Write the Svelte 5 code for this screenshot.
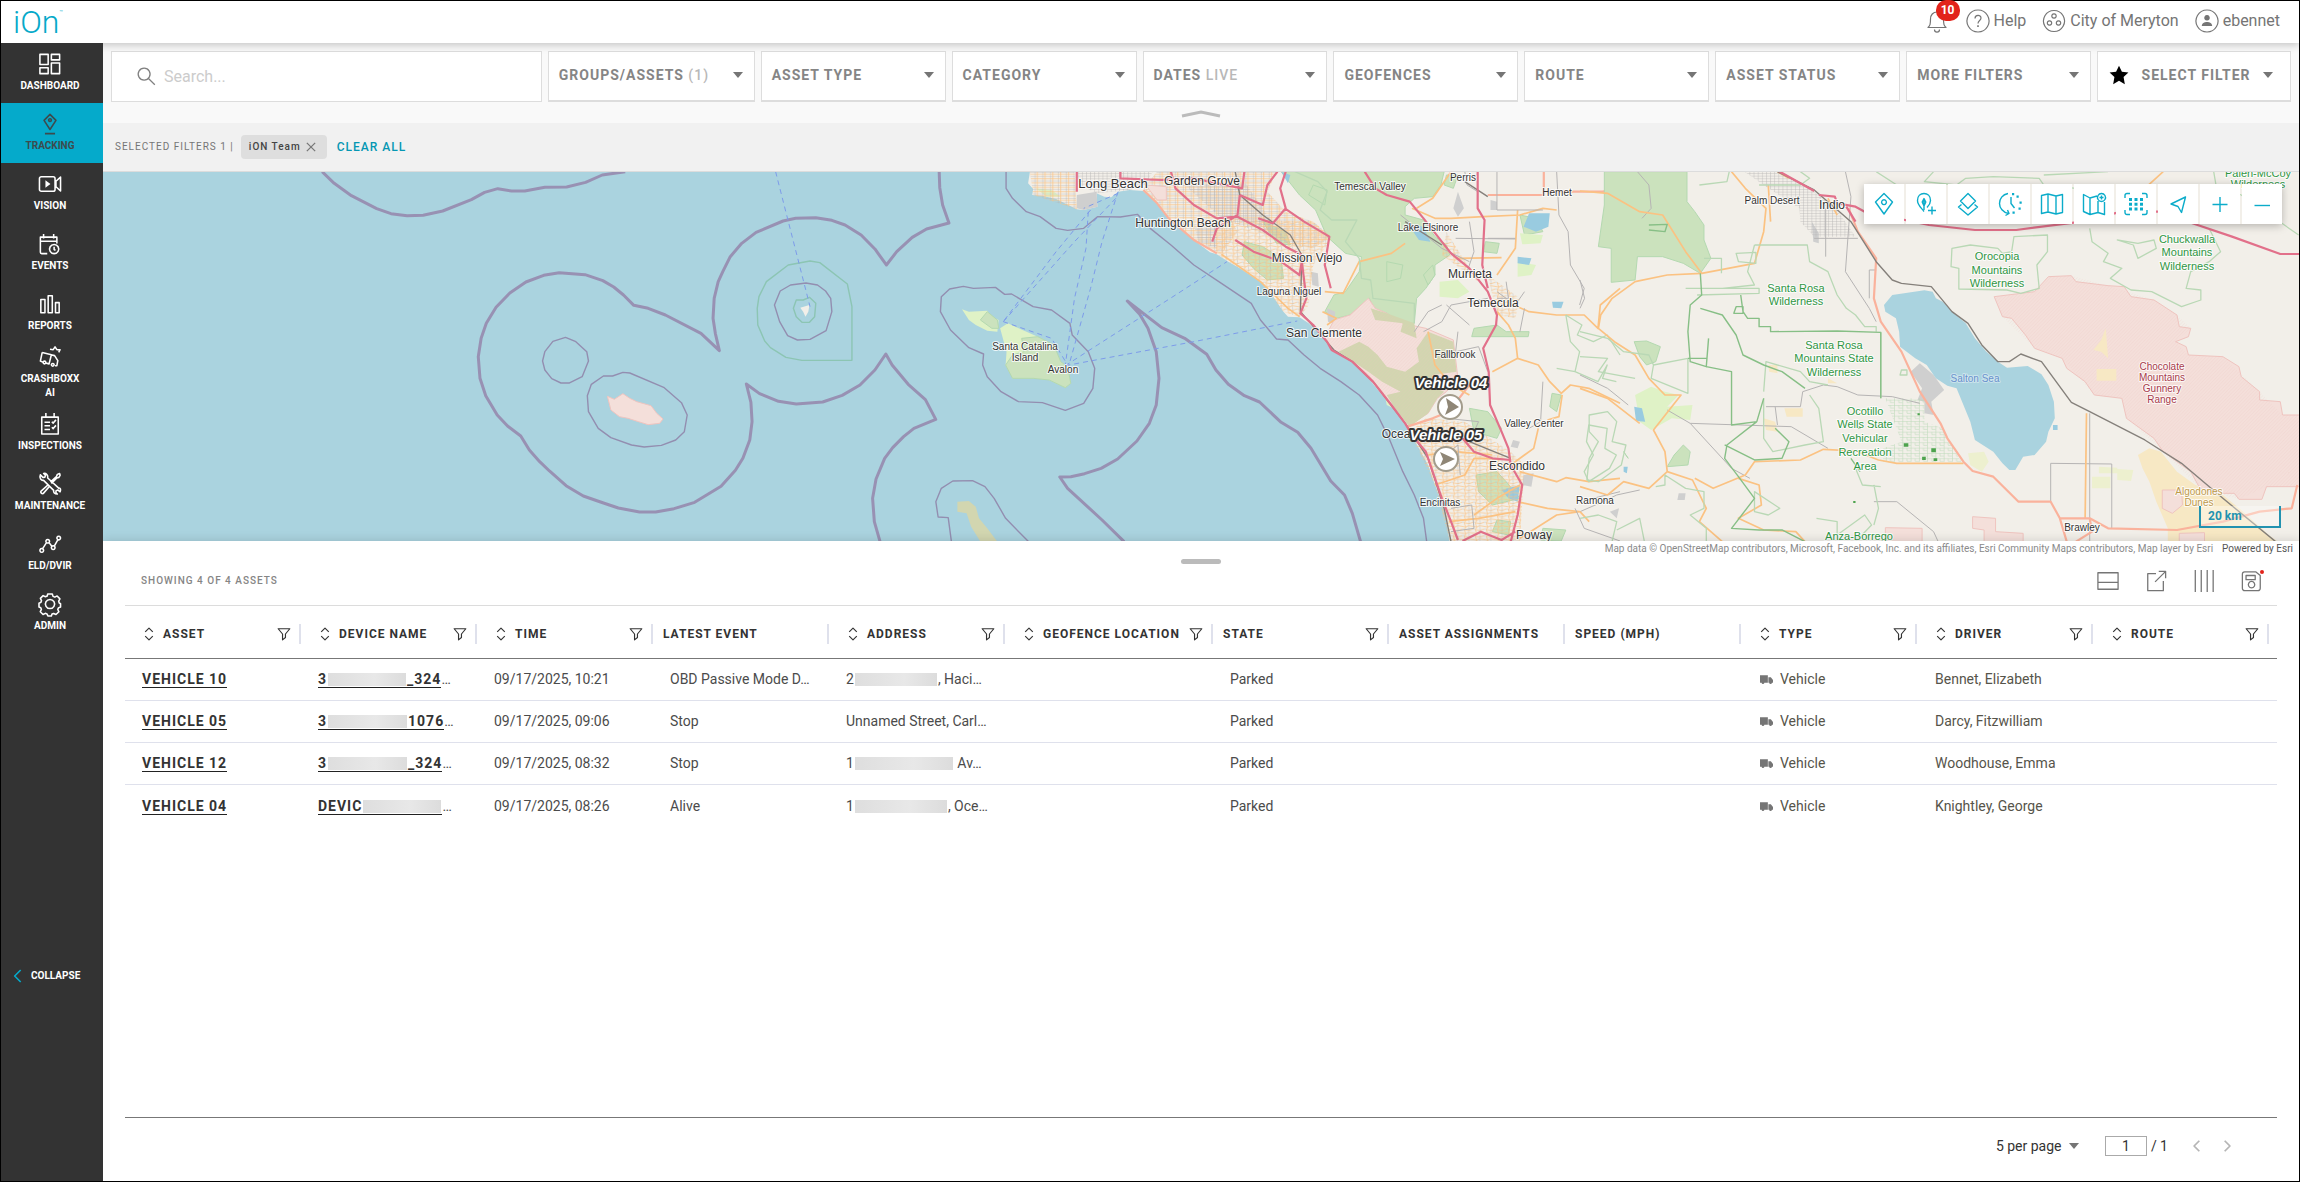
<script>
  const nav = [
    { id: 'dashboard', label: 'Dashboard' },
    { id: 'tracking', label: 'Tracking', active: true },
    { id: 'vision', label: 'Vision' },
    { id: 'events', label: 'Events' },
    { id: 'reports', label: 'Reports' },
    { id: 'crash', label: 'Crashboxx AI' },
    { id: 'inspections', label: 'Inspections' },
    { id: 'maintenance', label: 'Maintenance' },
    { id: 'eld', label: 'ELD/DVIR' },
    { id: 'admin', label: 'Admin' }
  ];

  const filters = [
    { label: 'Groups/Assets', note: '(1)' },
    { label: 'Asset Type' },
    { label: 'Category' },
    { label: 'Dates', note: 'Live' },
    { label: 'Geofences' },
    { label: 'Route' },
    { label: 'Asset Status' },
    { label: 'More Filters' },
    { label: 'Select Filter', star: true }
  ];

  // s: drawn with a stroke, f: filled
  const icons = {
    dashboard: { s: 'M1 1.5h9v11h-9zM13.500 1.500h9v6h-9zM1 16h9v6.500h-9zM13.500 11h9v11.500h-9z' },
    tracking: { s: 'M12 1.500L18.500 8 12 18 5.500 8zM6.500 22.500h11M12 6.200a1.500 1.500 0 1 0 .01 0z' },
    vision: { s: 'M2.500 4h13a2 2 0 0 1 2 2v12a2 2 0 0 1-2 2h-13a2 2 0 0 1-2-2v-12a2 2 0 0 1 2-2zM23.500 4.500v15l-5-4.500v-6z', f: 'M7 8l5.500 4-5.500 4z' },
    events: { s: 'M9 22.500H3a1.500 1.500 0 0 1-1.500-1.500V4.500h18v7M1.500 9h18M5 1v5M16 1v5M16.500 12.500a5 5 0 1 0 .01 0zM16.500 15v3l1.500 1' },
    reports: { s: 'M2 7h4.500v14.500h-4.500zM10 3h4.500v18.500h-4.500zM18 10.500h4v11h-4z' },
    crash: { s: 'M3.500 7l10 2.500-2.500 10-4-1M3.500 7l-2 9.500 2.500 1M13 9.500l4 1 3.500 5.500-1 5.500h-2M6 16.500a1.500 1.500 0 1 0 .01 0zM15 19a1.500 1.500 0 1 0 .01 0zM12 3.500l3.500.5 2-3 2 3h3.500l-1.500 3' },
    inspections: { s: 'M3 4.500h18v18.500h-18zM7.500 0v5M16.500 0v5M6 10h6M6 14h6M6 18h6M14 9.500l1.500 1.500 3-3.500M14 15.500l1.500 1.500 3-3.500' },
    maintenance: { s: 'M1.500 2l3 3 2-.5.5-2-2-2c3-.5 5 2 4.500 5l12 11c2-.5 2.500 2 1.500 4l-2.500-2-2 1v2l1.500 1.500c-3 0-4.500-2-4-4L5 8C2.500 8.500 0 5.500 1.500 2zM12.500 10l6.500-6 1-2.500 2.500-1 .5 2-1.500 2.500-2 .5-6 6M10.500 12.500L2 20a2 2 0 0 0 2.500 2.500l7.500-8.500' },
    eld: { s: 'M4 17l4.500-7M11 10.500l3 4M16.500 14.500l4-7M3 17a2 2 0 1 0 .01 0zM9.500 7a2 2 0 1 0 .01 0zM15.500 14a2 2 0 1 0 .01 0zM21.500 3.500a2 2 0 1 0 .01 0z' },
    admin: { s: 'M9.500 1h5l.8 2.700 2 .8 2.500-1.300 3 3.200-1.300 2.500.6 2 1.400.800v3.500l-2.300 1-.7 1.800 1.200 2.500-3.200 3-2.500-1.200-1.800.700-.700 2h-3.800l-1-2.200-1.800-.600-2.500 1.200-3-3 1.200-2.600-.700-1.800-1.900-.800v-4l2-1 .7-1.800-1.200-2.500 3-3 2.500 1.200 2-.8zM12 7a5 5 0 1 0 .01 0z' },
    pin: { s: 'M12 1.500L20.500 10 12 22 3.500 10zM12 7.800a2.400 2.400 0 1 0 .01 0z' },
    pen: { s: 'M10 19.500C7 15.500 3.500 13 3.500 8.500 3.500 4 6.500 1.500 10 1.500s6.500 2.500 6.500 7C16.500 11.500 15 13.500 13 15.500M10 8v10M18 14.500v8M14 18.500h8M10 6.500l1.800 3.500-1.800 4-1.800-4z' },
    layers: { s: 'M12 1.500l7.500 7.500-7.500 7.500-7.500-7.500zM5.500 12.500l-3 2.500 9.500 8 9.500-8-3-2.500' },
    history: { s: 'M10 1.500C4.500 2.500 1.500 7 1.500 11.500S5 20.500 10.500 21.500M7.500 23.500l3.500-2-1.500-3.500M13 5v6.500l3.500 4.500', f: 'M14 1h2.200v2.200H14zM18.500 3.500h2.200v2.200h-2.200zM21.500 9.500h2.200v2.200h-2.200zM20.500 15.500h2.200v2.200h-2.200zM14.500 19.500h2.200v2.200h-2.200z' },
    map: { s: 'M1.500 3.500l6.500-1.500 8 2 6.500-1.500v18l-6.500 1.500-8-2-6.500 1.500zM8 2v18M16 4v18' },
    mapadd: { s: 'M15 4l-7 2-6.500-3.500v17L8 22.500l8-2 6.500 2V10M8 6v16M16 9v11M19.500 1.500a4 4 0 1 0 .01 0zM19.500 3.500v4M17.500 5.500h4' },
    cluster: { s: 'M6 1.500H3A2 2 0 0 0 1 3.500V6M18 1.500h3a2 2 0 0 1 2 2V6M6 22.500H3a2 2 0 0 1-2-2V18M18 22.500h3a2 2 0 0 0 2-2V18', f: 'M5 6h3v3h-3zM10.500 6h3v3h-3zM16 6h3v3h-3zM5 10.800h3v3h-3zM10.500 10.800h3v3h-3zM16 10.800h3v3h-3zM5 15.500h3v3h-3zM10.500 15.500h3v3h-3zM16 15.500h3v3h-3z' },
    locate: { s: 'M19.500 5L5 12l7 2.500 3.500 6z' },
    plus: { s: 'M12 5v15M4.500 12.500h15' },
    minus: { s: 'M4.500 13.500h15.500' },
    card: { s: 'M1 3h22v18h-22zM1 13.500h22' },
    export: { s: 'M12 4H3v18.500h17V12M11 13l11-11M15 1.500h7.500V9' },
    columns: { s: 'M2.500 0v24M9 0v24M15.500 0v24M22 0v24' },
    save: { s: 'M4 2h12l5 4v14a2.500 2.500 0 0 1-2.500 2.500H4A2.500 2.500 0 0 1 1.500 20V4.500A2.500 2.500 0 0 1 4 2zM5.500 6h10v4.500h-10zM11.500 12.500a3.500 3.500 0 1 0 .01 0z' },
    bell: { s: 'M3 18.500c2-2 2.500-3 2.500-8.500 0-4 2.500-7 6.500-7s6.500 3 6.500 7c0 5.500.5 6.500 2.500 8.500zM9.500 20.500c0 3.500 5 3.500 5 0M12 1v2' },
    help: { s: 'M12 1a11 11 0 1 0 .01 0zM9 9.500c0-4 6-4 6-.5 0 2.500-3 2.500-3 5.500', f: 'M11.200 16.200h1.600v1.800h-1.600z' },
    org: { s: 'M12 1.500a10.500 10.500 0 1 0 .01 0zM12 4.800a2.200 2.200 0 1 0 .01 0zM7.500 11.800a2.200 2.200 0 1 0 .01 0zM16.500 11.800a2.200 2.200 0 1 0 .01 0z' },
    user: { s: 'M12 1a11 11 0 1 0 .01 0z', f: 'M12 6a2.800 2.800 0 1 0 .01 0zM6.800 17c0-5.500 10.400-5.500 10.400 0z' },
    search: { s: 'M9 1.500a7.500 7.500 0 1 0 .01 0zM14.500 14.500l8 8' },
    star: { f: 'M12 1l3.500 7 7.800 1-5.800 5.500 1.500 8.500L12 19l-7 4 1.500-8.500L.7 9l7.800-1z' },
    sort: { s: 'M5.500 8.500L12 2l6.500 6.500M5.500 15.500L12 22l6.500-6.500' },
    funnel: { s: 'M2 3h20l-7.500 9v6l-5 4V12z' },
    truck: { f: 'M0 4h14.500v14H8a2.500 2.500 0 0 1-5 0H0zM15.500 8h4.500l4 5v5h-2a2.500 2.500 0 0 1-5 0h-1.500z' },
    close: { s: 'M2 2l20 20M22 2L2 22' },
    left: { s: 'M16 3l-9 9 9 9' },
    right: { s: 'M8 3l9 9-9 9' }
  };

  const tools = [
    ['pin', 'Assets'], ['pen', 'Add landmark'], ['layers', 'Layers'], ['history', 'History'], ['map', 'Base map'],
    ['mapadd', 'Add map'], ['cluster', 'Clusters'], ['locate', 'Locate'], ['plus', 'Zoom in'], ['minus', 'Zoom out']
  ];
  const panelTools = [['card', 'Split view'], ['export', 'Export'], ['columns', 'Columns'], ['save', 'Save view']];

  const columns = [
    { label: 'Asset', sort: true, filter: true },
    { label: 'Device Name', sort: true, filter: true },
    { label: 'Time', sort: true, filter: true },
    { label: 'Latest Event' },
    { label: 'Address', sort: true, filter: true },
    { label: 'Geofence Location', sort: true, filter: true, wide: true },
    { label: 'State', filter: true },
    { label: 'Asset Assignments' },
    { label: 'Speed (MPH)' },
    { label: 'Type', sort: true, filter: true },
    { label: 'Driver', sort: true, filter: true },
    { label: 'Route', sort: true, filter: true }
  ];

  // dev and addr: visible start, width of the masked part, visible end
  const rows = [
    { asset: 'Vehicle 10', dev: ['3', 78, '_324'], time: '09/17/2025, 10:21', event: 'OBD Passive Mode D…', addr: ['2', 82, ', Haci…'], driver: 'Bennet, Elizabeth' },
    { asset: 'Vehicle 05', dev: ['3', 79, '1076'], time: '09/17/2025, 09:06', event: 'Stop', addr: ['Unnamed Street, Carl…', 0, ''], driver: 'Darcy, Fitzwilliam' },
    { asset: 'Vehicle 12', dev: ['3', 79, '_324'], time: '09/17/2025, 08:32', event: 'Stop', addr: ['1', 98, ' Av…'], driver: 'Woodhouse, Emma' },
    { asset: 'Vehicle 04', dev: ['DEVIC', 78, ''], time: '09/17/2025, 08:26', event: 'Alive', addr: ['1', 92, ', Oce…'], driver: 'Knightley, George' }
  ];

  const towns = [
    [1113, 188, 13, 'Long Beach'], [1202, 185, 12, 'Garden Grove'], [1370, 190, 10, 'Temescal Valley'], [1183, 227, 12, 'Huntington Beach'],
    [1307, 262, 12, 'Mission Viejo'], [1289, 295, 10, 'Laguna Niguel'], [1324, 337, 12, 'San Clemente'], [1463, 181, 10, 'Perris'],
    [1557, 196, 10, 'Hemet'], [1428, 231, 10, 'Lake Elsinore'], [1470, 278, 12, 'Murrieta'], [1493, 307, 12, 'Temecula'],
    [1455, 358, 10, 'Fallbrook'], [1025, 350, 10, 'Santa Catalina'], [1025, 361, 10, 'Island'], [1063, 373, 10, 'Avalon'],
    [1396, 438, 12, 'Ocea'], [1534, 427, 10, 'Valley Center'], [1517, 470, 12, 'Escondido'], [1440, 506, 10, 'Encinitas'],
    [1595, 504, 10, 'Ramona'], [1534, 539, 12, 'Poway'], [1772, 204, 10, 'Palm Desert'], [1832, 209, 12, 'Indio'], [2082, 531, 10, 'Brawley']
  ];
  const parks = [
    [2258, 177, 11, 'Palen-McCoy'], [2258, 188, 11, 'Wilderness'], [2187, 243, 11, 'Chuckwalla'], [2187, 256, 11, 'Mountains'], [2187, 270, 11, 'Wilderness'],
    [1997, 260, 11, 'Orocopia'], [1997, 274, 11, 'Mountains'], [1997, 287, 11, 'Wilderness'], [1796, 292, 11, 'Santa Rosa'], [1796, 305, 11, 'Wilderness'],
    [1834, 349, 11, 'Santa Rosa'], [1834, 362, 11, 'Mountains State'], [1834, 376, 11, 'Wilderness'], [1865, 415, 11, 'Ocotillo'], [1865, 428, 11, 'Wells State'],
    [1865, 442, 11, 'Vehicular'], [1865, 456, 11, 'Recreation'], [1865, 470, 11, 'Area'], [1859, 540, 11, 'Anza-Borrego']
  ];
  const range = [[2162, 370, 10, 'Chocolate'], [2162, 381, 10, 'Mountains'], [2162, 392, 10, 'Gunnery'], [2162, 403, 10, 'Range']];
  const dunes = [[2199, 495, 10, 'Algodones'], [2199, 506, 10, 'Dunes']];
  const sea = [[1975, 382, 10, 'Salton Sea']];
  const vehicles = [
    { x: 1451, y: 388, cx: 1450, cy: 407, label: 'Vehicle 04', turn: 'M-4 -9L9 0 -5 8 -2 0z' },
    { x: 1446, y: 440, cx: 1446, cy: 459, label: 'Vehicle 05', turn: 'M-6 -7L9 0 -6 7 -3 0z' }
  ];
</script>

{#snippet icon(name)}
  <svg class="icon" viewBox="0 0 24 24" aria-hidden="true">
    {#if icons[name].s}<path class="line" d={icons[name].s} />{/if}
    {#if icons[name].f}<path class="solid" d={icons[name].f} />{/if}
  </svg>
{/snippet}

{#snippet labels(list, kind)}
  {#each list as [x, y, size, text]}
    <text class={kind} {x} {y} font-size={size}>{text}</text>
  {/each}
{/snippet}

<div class="shell">
  <header>
    <a class="logo" href="#home">iOn<sup>™</sup></a>
    <div class="account">
      <button class="alerts" aria-label="Notifications">{@render icon('bell')}<span class="badge">10</span></button>
      <a href="#help">{@render icon('help')}Help</a>
      <a href="#org">{@render icon('org')}City of Meryton</a>
      <a href="#user">{@render icon('user')}ebennet</a>
    </div>
  </header>

  <div class="body">
    <nav>
      {#each nav as item}
        <a href="#{item.id}" class:active={item.active}>{@render icon(item.id)}<span>{item.label}</span></a>
      {/each}
      <button class="collapse">{@render icon('left')}Collapse</button>
    </nav>

    <main>
      <section class="filterbar">
        <div class="filters">
          <label class="search">{@render icon('search')}<input type="search" placeholder="Search..." aria-label="Search" /></label>
          {#each filters as f}
            <button class:favorite={f.star}>
              {#if f.star}{@render icon('star')}{/if}
              <span>{f.label} {#if f.note}<em>{f.note}</em>{/if}</span>
              <i class="caret"></i>
            </button>
          {/each}
        </div>
        <button class="fold" aria-label="Hide filters"><svg viewBox="0 0 40 8"><path d="M1 6L20 2 39 6" /></svg></button>
      </section>

      <section class="selected">
        <span>Selected Filters 1 |</span>
        <button class="chip">iON Team {@render icon('close')}</button>
        <button class="clear">Clear All</button>
      </section>

      <section class="map">
        <svg class="tiles" viewBox="103 172 2196 369" preserveAspectRatio="xMidYMin slice" role="img" aria-label="Map of Southern California">
          <defs>
            <pattern id="hatch" width="6" height="6" patternUnits="userSpaceOnUse" patternTransform="rotate(35)"><path class="hatch" d="M1 0V6" /></pattern>
            <pattern id="streets" width="17" height="13" patternUnits="userSpaceOnUse">
              <path class="minor" d="M5 0V13M0 9H17" /><path class="road" d="M0 2H17M10 0V13" />
            </pattern>
            <pattern id="blocks" width="9" height="8" patternUnits="userSpaceOnUse"><path class="minor" d="M0 1H9M1 0V8" /></pattern>
            <pattern id="plots" width="18" height="16" patternUnits="userSpaceOnUse"><path class="park-line" d="M0 1H18M1 0V16M10 1V9H18" /></pattern>
            <pattern id="suburb" width="24" height="20" patternUnits="userSpaceOnUse">
              <path class="road" d="M0 4L8 6 14 2 24 4M6 0L8 6 5 14 6 20M5 14L16 16 24 12" /><path class="minor" d="M14 2L16 16 13 20M0 12H5" />
            </pattern>
          </defs>
          <rect class="water" x="103" y="172" width="2196" height="369" />

          <!-- open sea: territorial limits and the outer islands -->
          <g transform="translate(100 165) scale(.574 .33333)">
            <path class="limit" d="M387 20L408 55 438 92 482 131 507 146 535 152 563 151 597 138 647 104 670 82 693 71 717 78 740 78 775 67 813 66 846 52 875 30 915 20" />
            <path class="limit" d="M1462 20L1463 68 1468 120 1479 174 1440 192 1415 217 1388 260 1370 300 1350 252 1326 210 1298 180 1275 166 1247 158 1212 160 1190 168 1143 202 1118 235 1098 275 1085 320 1077 350 1070 400 1068 460 1072 505 1079 557 1047 505 985 450 955 430 930 421 912 390 895 366 876 347 845 329 800 323 773 331 742 351 714 384 690 427 673 475 664 520 659 575 662 640 672 692 692 750 710 783 733 813 748 855 766 890 783 918 812 962 842 993 872 1011 903 1029 940 1041 968 1041 1000 1031 1036 1012 1082 964 1107 916 1120 880 1132 825 1136 770 1134 712 1126 657 1149 686 1182 709 1213 717 1259 711 1293 691 1324 660 1350 615 1369 567 1380 600 1408 658 1438 704 1456 763 1418 790 1400 815 1381 848 1367 880 1352 942 1346 1000 1349 1070 1359 1130" />
            <path class="baseline" d="M811 517L829 530 848 560 851 588 840 635 818 654 803 654 787 641 775 615 771 588 775 560 789 529ZM877 633L893 633 911 622 923 624 982 667 1013 713 1023 750 1018 800 1003 825 978 841 948 846 926 840 890 818 868 790 851 740 849 692 856 658ZM1230 354L1250 360 1264 378 1273 400 1275 440 1265 497 1237 523 1215 525 1198 512 1184 470 1175 420 1185 378 1203 360Z" />
            <path class="reserve" d="M1199 300L1237 288 1254 293 1302 357 1310 425 1310 586 1223 586 1195 577 1168 548 1158 528 1146 480 1145 430 1148 395 1161 350ZM1213 405L1225 405 1236 397 1247 415 1245 455 1236 472 1223 472 1213 455 1208 430Z" />
            <path class="land" d="M1220 428L1236 420 1234 440 1229 455 1225 440Z" />
            <path class="military" d="M884 694L896 703 911 686 923 700 935 710 960 722 970 745 981 762 975 775 955 779 938 770 920 760 905 755 890 735Z" />
            <path class="ferry" d="M1177 20L1237 425" />
          </g>

          <!-- coast from Long Beach to Poway -->
          <g transform="translate(900 165) scale(.4592 .33333)">
            <path class="land" d="M283 20L279 55 290 72 288 90 310 92 340 102 385 133 400 135 430 125 428 85 445 95 460 97 475 80 500 75 530 78 560 115 585 160 610 190 640 225 675 262 690 268 715 290 740 310 785 350 800 370 815 400 835 440 845 455 870 457 890 475 915 510 930 535 945 560 990 595 1020 640 1050 690 1085 750 1110 800 1130 850 1150 900 1165 960 1185 1030 1197 1130 3070 1130 3070 15Z" />
            <path class="forest" d="M830 20L1185 20 1178 60 1160 95 1120 100 1100 125 1100 150 1140 165 1165 215 1190 240 1197 270 1165 300 1165 330 1145 370 1125 400 1120 475 1095 475 1060 445 1035 440 1022 400 980 450 950 460 925 440 945 390 970 380 1000 320 1005 275 970 265 930 215 905 135 870 90Z" />
            <path class="forest" d="M750 230L790 245 830 280 835 340 800 345 770 310 745 270ZM790 170L840 200 850 240 820 235ZM1240 730L1280 740 1310 790 1300 820 1250 800ZM1255 930L1300 920 1320 950 1350 1000 1290 1020 1260 980ZM1250 490L1300 480 1320 500 1370 500 1368 515 1245 515ZM1060 350L1090 340 1095 300 1060 290ZM1420 685L1440 690 1430 740 1415 725ZM1350 150L1385 160 1400 200 1360 210ZM1190 30L1215 30 1205 70 1185 60ZM1275 230L1305 235 1300 265 1270 260ZM1160 300L1140 330 1150 360 1165 330ZM900 60L930 75 925 120 890 90ZM1300 1065L1330 1070 1325 1110 1290 1100ZM1400 1090L1450 1095 1440 1128 1395 1125Z" />
            <path class="meadow" d="M1175 350L1215 345 1240 380 1215 400 1175 395ZM1345 290L1385 300 1375 330 1345 335ZM1350 205L1400 210 1395 235 1355 238ZM1050 650L1080 690 1090 740 1060 720ZM295 70L330 75 350 95 320 95ZM400 400L420 410Z" />
            <path class="lake" d="M1370 145L1415 145 1412 185 1385 200 1358 185ZM1105 175L1140 185 1155 230 1130 225ZM1345 275L1375 280 1370 300 1345 295ZM1420 410L1445 410 1440 430 1422 428ZM830 20L850 30 845 55ZM1310 975L1350 960 1345 1010 1325 1000Z" />
            <path class="gray-area" d="M385 90L428 80 430 125 400 135 385 130ZM1215 80L1228 130 1215 155 1205 130ZM895 320L910 325 912 365 898 360ZM930 430L948 440 945 475 932 470ZM1286 105L1300 110 1300 135 1286 135ZM1358 930L1380 925 1375 965 1355 960ZM1335 825L1350 830 1345 850 1330 845Z" />
            <path fill="url(#streets)" d="M560 20L820 20 800 80 840 140 900 170 940 215 900 250 850 240 780 180 720 160 735 200 700 268 640 225 585 160 545 90 530 70ZM283 20L380 20 385 133 290 90Z" />
            <path fill="url(#blocks)" d="M385 20L550 20 535 60 500 75 430 85 390 60ZM620 60L750 50 820 190 850 240 780 200 700 160ZM640 180L690 180 690 250 650 230Z" />
            <path fill="url(#suburb)" d="M690 160L900 170 940 220 900 300 890 420 870 457 835 440 785 350 690 268ZM1145 760L1230 770 1330 860 1360 900 1350 1128 1197 1128 1165 960 1110 800ZM1190 200L1240 310 1300 430 1260 350 1180 270ZM1280 330L1350 400 1340 460 1300 450Z" />
            <path class="military" d="M535 60L580 65 580 105 560 105ZM945 465L980 450 1020 400 1035 430 1060 445 1095 475 1145 490 1205 525 1215 640 1190 680 1170 700 1150 745 1105 785 1080 740 1050 680 1020 630 985 590 945 555 925 520Z" />
            <path class="scrub" d="M955 560L1000 530 1020 545 1040 570 1060 605 1100 620 1130 590 1125 550 1150 500 1205 530 1212 620 1160 630 1150 660 1185 680 1170 700 1150 745 1110 785 1080 735 1060 690 1090 680 1050 650 1020 620ZM1025 430L1060 445 1120 475 1125 520 1090 500 1095 475 1035 465Z" />
            <path class="hatched" d="M945 465L980 450 1020 400 1060 445 1095 475 1205 525 1215 640 1150 745 1105 785 1050 680 985 590 925 520Z" />
            <path class="meadow" d="M135 433L150 440 190 437 200 455 215 465 212 500 190 497 165 480 150 465ZM218 490L235 475 262 492 300 515 335 540 350 590 365 605 372 655 360 668 325 645 290 640 245 640 230 600 232 560Z" />
            <path class="forest" d="M190 440L212 465 215 490 200 490 175 465ZM265 520L300 515 335 540 350 590 365 605 372 655 360 668 325 645 290 640 245 640 230 600 245 570 270 560Z" />
            <path class="scrub" d="M125 1010L150 1008 165 1025 172 1060 190 1090 212 1130 175 1130 155 1085 145 1045 125 1040Z" />
            <path class="baseline" d="M231 20L231 70 245 100 275 140 305 155 340 190 365 196 400 190 430 155 480 156 517 148 545 190 590 240 640 300 700 355 765 415 785 465 820 522 845 525 880 570 915 610 960 650 1000 690 1040 750 1065 820 1095 920 1120 990 1140 1060 1147 1130M90 395L108 372 138 364 160 370 208 367 228 388 243 387 290 425 330 435 370 475 375 510 410 560 424 610 420 670 400 715 360 736 310 713 258 710 220 680 190 635 180 600 182 567 150 548 110 495 88 440ZM112 1130L105 1058 83 1056 78 1010 90 970 115 948 158 947 185 965 205 1000 230 1060 280 1130" />
            <path class="limit" d="M488 1130L440 1065 365 970 348 936 372 935 402 926 438 910 474 882 516 828 543 775 558 720 564 640 558 560 540 490 522 448 495 408 570 488 620 520 668 568 688 615 715 658 750 692 783 711 830 772 866 802 895 850 938 948 968 990 985 1045 1003 1130" />
            <path class="ferry" d="M475 80L440 230 415 370 370 590M415 135L340 260 222 475M470 100L380 230 270 400 225 470M410 140L405 250 380 400 360 600M360 602L430 540 600 390 712 290M360 602L640 530 865 468M225 470L330 520 365 600M475 85L400 130" />
            <path class="highway salmon" d="M1280 90L1402 90 1402 20M1568 70L1530 80 1402 80M530 75L560 115 585 160 640 225 690 265M1105 785L1160 760 1195 740 1240 660" />
            <path class="road" d="M1115 130L1165 160 1200 160 1270 155 1350 150 1400 130 1430 135M1345 135L1340 250 1300 330M1200 20L1160 100 1125 130M1210 280L1310 278M1320 410L1370 440 1430 450 1490 450 1520 490 1525 420 1568 370M1290 620L1345 580 1390 600 1415 650 1440 685 1460 660 1500 670 1568 715M1300 440L1325 480 1340 520 1345 580M1410 765L1435 755 1442 690M1390 790L1380 850 1330 900M1350 920L1430 950 1450 938 1500 950 1568 940M1150 870L1210 860 1290 870M1165 960L1230 930 1250 880 1290 880M1250 1050L1300 1000 1350 960M1195 1070L1260 1060 1340 1040M700 268L785 350 845 430 870 455M925 380L965 385 1000 290 1070 265 1100 235M920 440L950 460 930 480M1345 1010L1410 1030 1480 1040 1430 1050 1350 1120M1150 500L1165 600 1200 660 1240 690" />
            <path class="minor" d="M1430 20L1435 150 1455 200 1460 300 1490 370 1480 420M1280 220L1340 220M1300 20L1300 135 1400 135M1140 500L1180 470 1200 420 1280 400M1215 500L1210 560 1260 545 1280 620M1400 650L1395 770 1370 790M1470 1030L1490 1090 1568 1128M1300 380L1340 420 1360 380M1350 500L1360 430M1240 480L1190 420M1480 1010L1568 980M1230 20L1235 60 1258 80M1090 150L1180 250 1240 290M1240 170L1250 260 1230 340M1210 220L1340 222M1120 500L1150 440 1180 420M1320 350L1325 400 1300 400M1190 760L1260 770 1240 830M1180 880L1215 840 1220 930M1200 1030L1245 1020 1250 1090 1200 1100" />
            <path class="rail" d="M730 20L740 90 790 150 850 210 875 270 872 440 945 555 985 590 1030 650 1100 775 1150 880 1185 1030 1200 1130M1180 240L1100 170M1230 50L1280 95M1240 830L1330 880" />
            <path class="motorway" d="M480 20L480 40 570 45 640 40 745 70 750 20M590 20L600 70 640 120 690 160 735 155 790 195 840 245 875 270M822 20L800 60 790 120 740 90M840 20L828 70 840 130 812 175 780 160M838 130L880 170 935 215 925 300 938 370M730 225L770 260 830 290 870 330 875 290 885 400 872 445 900 480 930 530 940 555 985 590 1030 650 1070 720 1100 775 1115 810 1145 860 1160 920 1180 1000 1200 1070 1215 1125M1012 20L1035 70 1060 90 1110 110 1140 160 1200 265 1240 310 1280 380 1300 450 1298 480 1270 550 1282 620 1285 720 1310 800 1325 850 1330 900 1355 960 1345 1050 1330 1130M1258 20L1258 130 1273 165 1268 300 1280 370M1225 820L1250 860 1290 880 1330 885M1225 1128L1265 1100 1310 1125 1340 1100M385 20L385 80M680 230L690 190 735 150 740 90" />
            <path class="park-line" d="M860 20L910 50 930 80 915 135 940 165 995 165 970 230 1000 280 1005 340 1025 345 1030 400 1120 415 1120 475M1450 450L1485 480 1475 510 1510 530 1540 510 1568 570M1430 610L1470 620 1480 560 1460 530 1450 450M1470 620L1520 650 1540 600 1530 640 1560 650M1500 780L1540 790 1535 850 1560 870 1545 910 1500 950 1490 920 1510 870 1495 830Z" />
          </g>

          <!-- inland: mountains, Salton Sea and the desert -->
          <g transform="translate(1580 165) scale(.4592 .33333)">
            <path class="forest" d="M53 20L233 20 233 110 250 140 270 180 270 225 285 280 262 325 225 295 180 275 125 275 120 345 68 352 68 250 40 245 53 120Z" />
            <path class="forest" d="M118 530L145 528 175 545 165 590 145 600 130 575ZM225 840L240 860 235 900 190 905 205 870ZM95 860L105 880Z" />
            <path class="meadow" d="M120 690L155 665 185 680 215 690 190 725 245 720 240 765 200 760 155 795 130 770Z" />
            <path class="lake" d="M118 725L135 730 142 770 122 768ZM95 905L104 905 102 925 95 920ZM1030 780L1040 780 1040 795 1030 795Z" />
            <path class="wash" d="M845 865L880 860 890 890 875 920 850 900ZM1130 905L1170 908 1170 925 1130 925ZM1170 912L1205 915 1200 948 1170 945ZM1115 935L1155 935 1155 970 1115 970Z" />
            <path class="dunes" d="M1215 870L1240 850 1265 860 1300 920 1340 960 1400 990 1440 1035 1500 1110 1520 1130 1280 1130 1280 1090 1255 1010 1240 950 1225 910ZM410 600L430 600 430 625 412 620ZM445 730L485 730 485 755 450 755ZM400 760L425 770 430 800 405 795ZM540 640L560 655 540 655Z" />
            <path class="military" d="M902 395L990 380 1020 335 1070 332 1080 350 1150 362 1185 365 1200 395 1250 405 1300 450 1305 485 1330 490 1325 515 1297 530 1320 545 1325 570 1400 575 1435 605 1440 635 1480 680 1480 705 1525 710 1530 750 1570 750 1570 965 1495 965 1485 1003 1435 1003 1425 985 1385 985 1350 970 1330 920 1270 860 1250 820 1190 760 1180 700 1120 690 1100 650 1060 610 1050 580 990 550 970 510 940 460 920 455ZM1268 975L1310 975 1312 1020 1290 1045 1268 1030ZM855 1055L905 1060 905 1100 965 1105 965 1130 880 1130 880 1095 855 1090ZM665 1088L745 1090 745 1130 665 1130ZM1305 1105L1360 1103 1360 1130 1305 1130Z" />
            <path class="hatched" d="M902 395L990 380 1020 335 1070 332 1150 362 1250 405 1300 450 1330 490 1297 530 1325 570 1400 575 1480 680 1530 750 1570 750 1570 965 1495 965 1435 1003 1350 970 1270 860 1190 760 1180 700 1120 690 1050 580 990 550 920 455Z" />
            <path class="dunes" d="M1145 490L1150 580 1135 560 1118 555 1135 525ZM1125 612L1168 612 1168 647 1125 647Z" />
            <path class="gray-area" d="M740 595L770 630 793 675 765 710 770 750 750 745 750 710 735 705 745 670 720 620ZM215 985L230 985 228 1005 212 1005ZM505 170L520 205 520 235 508 230ZM65 1040L85 1030 80 1060Z" />
            <path class="sea" d="M662 420L680 390 750 376 768 380 775 400 790 410 810 440 840 475 860 520 885 560 910 590 930 608 975 603 1005 628 1020 660 1032 710 1034 760 1020 800 1015 830 990 870 965 875 948 915 935 915 920 895 900 860 860 825 850 770 835 720 820 670 800 662 775 640 755 600 730 580 697 545 695 500 688 460 665 440Z" />
            <path fill="url(#blocks)" d="M358 20L430 20 510 80 560 135 600 215 510 215 480 170 478 130 400 60Z" />
            <path fill="url(#plots)" d="M665 700L750 700 750 770 790 790 830 890 660 890 660 850 700 830Z" />
            <path class="minor" d="M578 20L590 95 578 320 630 430 645 470M535 130L535 275M605 220L510 220M645 315L630 315 630 400M405 725L480 725 485 680 530 660 560 665 605 690 680 695 740 715M190 735L240 775 330 910 370 940M240 775L460 785 540 850M640 1010L690 1010 770 1100 780 1130M1025 895L1158 897 1158 1090M1025 895L1025 1010M125 20L150 60 155 130 135 160M0 345L10 400 0 430M0 1040L50 1010 80 990 130 975M0 630L60 670 105 720M1110 745L1110 1130M425 725L430 780" />
            <path class="road" d="M0 78L60 85 130 140 180 150 230 260 265 325 380 295 400 200 405 130 360 70 330 20M265 325L190 330 120 350 70 400 45 450 40 490 75 530 120 570 150 640 185 690 220 690 160 795 185 860 190 920 150 970 95 950 60 990 0 965M190 920L245 945 275 1030 260 1070 310 1130M250 940L290 970 360 930 380 890 480 885 530 853 600 858 650 885 690 895 835 895M1103 745L1100 1060M430 20L455 40M410 60L415 170M345 940L390 960 395 1020 345 1060 400 1095 470 1100 490 1130M1230 70L1270 20M0 670L60 700 130 775M20 1070L0 1040M540 100L560 150" />
            <path class="highway salmon" d="M585 130L605 200 645 280 640 400 655 470 700 560 740 680 785 775 800 820 835 890 855 918 900 935 955 1010 1025 1010 1045 1060 1110 1060 1150 1090 1300 1095 1400 1070 1480 1040 1550 1030 1562 960M1045 1060L1060 1130M1110 1060L1115 1100 1080 1130" />
            <path class="park-line" d="M380 240L495 240 500 290 540 320 560 390 580 430 600 450 620 485 645 485 645 500M380 240L365 320 380 360 310 370 230 370M240 370L390 370 390 385 255 390M340 265L383 262 383 295 345 290ZM270 280L308 280 308 325M480 20L500 40 480 60 390 60M325 20L320 50 260 60M810 250L850 240 910 250 920 265 940 260 945 215 1018 210 1018 260 995 300 1000 370 960 385 930 375 825 372 825 310 808 305ZM1110 190L1115 230 1150 265 1140 290 1180 310 1155 340 1200 375 1245 380 1310 425 1352 405 1352 375 1320 370 1330 320 1370 290 1395 260 1370 190M1170 225L1215 235 1250 225 1255 250 1215 280 1205 240ZM770 20L750 50 820 60 840 40 900 35 1000 40 1010 60 1080 70M1010 30L1150 20M645 20L690 60M1380 20L1385 60 1440 90 1565 210M700 615L712 615 712 630 697 630ZM655 500L655 700M0 500L60 520 95 560 150 570 160 600 235 580M0 575L60 580 40 620 120 640M160 600L155 640 235 685 235 580M400 680L405 590 480 620 500 650 540 660M400 700L400 820 420 860 490 840 530 830 520 730 500 690M20 750L60 740 80 770 70 830 100 840 90 900 40 950 15 945 20 880 40 830 20 800ZM0 1060L40 1050 80 1070 70 1128M80 1095L130 1060 140 1128M165 965L185 960 185 930 230 970 270 980 270 1030 240 1050 275 1090 275 1130M380 980L435 1030 410 1050 380 1040ZM515 1060L560 1070 560 1110 620 1050 635 1080 600 1130M640 960L650 1030 640 1080M600 910L615 960 655 965" />
            <path class="park-line strong" d="M262 325L265 390 240 420 235 500 240 590 275 605 280 520M262 430L310 450 340 510 355 570 400 600 440 620 470 650 490 670M350 390L355 440 365 460 390 460 390 485 415 485 415 500 560 498 655 502M340 425L355 425 355 445 335 445ZM655 502L655 700M275 605L330 620 330 780 385 770 400 700M385 770L320 840 315 880 345 935 380 1000 330 1090 390 1095 440 1095 490 1130M150 180L190 178 185 200 150 195M235 580L275 580M315 840L380 885 440 880 455 830 425 790M590 880L610 920" />
            <path class="rail" d="M430 20L510 75 565 140 590 170 620 235 645 290 680 345 700 355 765 365 810 440 845 475 875 540 910 590 935 590 960 567 1005 590 1070 712 1110 740 1230 825 1310 895 1400 1000 1515 1130" />
            <path class="motorway" d="M435 20L510 78M520 90L555 95 560 115 600 125 620 140 760 180 860 195 950 195 1080 172 1180 140 1260 140 1340 178 1420 215 1525 267 1570 267M580 125L600 170" />
            <path class="tree" d="M705 835h10v10h-10zM745 875h8v10h-8zM765 850h10v12h-10zM770 880h8v8h-8zM735 745h5v6h-5zM605 785h7v7h-7zM595 1008h5v6h-5z" />
          </g>

          <g class="labels">
            {@render labels(towns, 'town')}
            {@render labels(parks, 'park')}
            {@render labels(range, 'range')}
            {@render labels(dunes, 'dune')}
            {@render labels(sea, 'bay')}
          </g>
          {#each vehicles as v}
            <g transform="translate({v.cx} {v.cy})"><circle class="marker" r="12" /><path class="arrow" d={v.turn} /></g>
            <text class="vehicle" x={v.x} y={v.y}>{v.label}</text>
          {/each}
        </svg>

        <div class="toolbar">
          {#each tools as [name, label]}
            <button aria-label={label}>{@render icon(name)}</button>
          {/each}
        </div>
        <div class="scale">20 km</div>
      </section>

      <section class="panel">
        <p class="credits">
          <span>Map data © OpenStreetMap contributors, Microsoft, Facebook, Inc. and its affiliates, Esri Community Maps contributors, Map layer by Esri</span>
          <a href="#esri">Powered by Esri</a>
        </p>
        <div class="handle"></div>
        <div class="summary">
          <span>Showing 4 of 4 assets</span>
          <div class="actions">
            {#each panelTools as [name, label]}
              <button class:unsaved={name === 'save'} aria-label={label}>{@render icon(name)}</button>
            {/each}
          </div>
        </div>

        <table>
          <colgroup>
            {#each columns as c}<col class:wide={c.wide} />{/each}
            <col class="end" />
          </colgroup>
          <thead>
            <tr>
              {#each columns as c}
                <th scope="col" class:sortable={c.sort}>
                  <div>
                    {#if c.sort}{@render icon('sort')}{/if}
                    <span>{c.label}</span>
                    {#if c.filter}<button aria-label="Filter {c.label}">{@render icon('funnel')}</button>{/if}
                  </div>
                </th>
              {/each}
              <td></td>
            </tr>
          </thead>
          <tbody>
            {#each rows as r}
              <tr>
                <td><a href="#asset">{r.asset}</a></td>
                <td><a href="#device">{r.dev[0]}<span class="mask" style:width="{r.dev[1]}px"></span>{r.dev[2]}</a>…</td>
                <td>{r.time}</td>
                <td>{r.event}</td>
                <td>{r.addr[0]}{#if r.addr[1]}<span class="mask" style:width="{r.addr[1]}px"></span>{/if}{r.addr[2]}</td>
                <td></td>
                <td>Parked</td>
                <td></td>
                <td></td>
                <td class="type">{@render icon('truck')}Vehicle</td>
                <td class="driver">{r.driver}</td>
                <td></td>
                <td></td>
              </tr>
            {/each}
          </tbody>
        </table>

        <footer>
          <div class="per-page">
            <select aria-label="Rows per page"><option>5 per page</option></select>
            <i class="caret"></i>
          </div>
          <input type="text" value="1" aria-label="Page" />
          <span>/ 1</span>
          <button aria-label="Previous page">{@render icon('left')}</button>
          <button aria-label="Next page">{@render icon('right')}</button>
        </footer>
      </section>
    </main>
  </div>
</div>

<style>
  :global(body) { margin: 0; background: #fff; }
  * { box-sizing: border-box; }
  .shell { display: flex; flex-direction: column; min-height: 100vh; border: 1px solid #000; font: 14px/20px Roboto, "Liberation Sans", sans-serif; color: #4b4b4b; background: #fff; }
  button { border: 0; padding: 0; background: none; font: inherit; color: inherit; cursor: pointer; }
  a { color: inherit; text-decoration: none; }
  .icon { display: block; flex: none; width: 24px; height: 24px; overflow: visible; }
  .line { fill: none; stroke: currentColor; stroke-width: 1.6; stroke-linejoin: round; }
  .solid { fill: currentColor; }
  .caret { flex: none; width: 0; height: 0; border: 5px solid transparent; border-top: 6px solid #757575; border-bottom: 0; }

  header { display: flex; align-items: center; justify-content: space-between; height: 42px; padding: 0 19px 0 12px; background: #fff; box-shadow: 0 2px 8px rgba(0, 0, 0, .22); position: relative; z-index: 1; }
  .logo { display: flex; align-items: flex-start; font: 300 32px/38px Roboto, sans-serif; color: #05a9c9; }
  .logo sup { font-size: 6px; line-height: 18px; }
  .account { display: flex; align-items: center; font-size: 16px; color: #757575; padding-bottom: 2px; }
  .account a { display: flex; align-items: center; gap: 4px; margin-left: 16px; }
  .account .line { stroke-width: 1.2; }
  .alerts { position: relative; }
  .account a:nth-child(2) { margin-left: 17px; }
  .badge { position: absolute; left: 11px; top: -9px; width: 24px; height: 21px; border-radius: 10px; background: #e2231a; color: #fff; font-size: 12px; font-weight: 700; }

  .body { display: flex; flex: 1; }
  nav { display: flex; flex-direction: column; width: 102px; flex: none; background: #333; color: #fff; position: relative; z-index: 2; font: 700 10px/14px Roboto, sans-serif; text-transform: uppercase; text-align: center; padding-bottom: 187px; }
  nav a { display: flex; flex-direction: column; align-items: center; justify-content: center; gap: 4px; height: 60px; padding: 0 18px 0 14px; }
  nav a .icon { width: 22px; height: 22px; }
  nav a .line { stroke-width: 1.7; }
  nav .active { background: #05aacb; color: #3d4a4d; }
  .collapse { display: flex; align-items: center; gap: 5px; margin: auto 0 10px 9px; text-transform: uppercase; }
  .collapse .icon { width: 16px; height: 16px; color: #05aacb; }
  .collapse .line { stroke-width: 2.4; }

  main { display: flex; flex-direction: column; flex: 1; min-width: 0; }
  .filterbar { display: flex; flex-direction: column; height: 80px; padding: 8px 8px 0; background: #f9f9f9; }
  .filters { display: grid; flex: none; grid-template-columns: 431fr 207fr repeat(7, 185fr) 194fr; gap: 6px; height: 51px; }
  .filters > * { display: flex; align-items: center; min-width: 0; background: #fff; border: 1px solid #ddd; }
  .filters button { border-bottom-width: 2px; justify-content: space-between; padding: 0 11px 2px 10px; font-weight: 700; letter-spacing: 1px; text-transform: uppercase; color: #858585; white-space: nowrap; }
  .filters em { font-style: normal; font-weight: 500; color: #b8b8b8; }
  .search { gap: 8px; padding-left: 25px; }
  .search .icon { width: 19px; height: 19px; color: #808080; }
  .search input { flex: 1; min-width: 0; padding: 0; border: 0; outline: 0; background: none; font: 16px/24px Roboto, sans-serif; }
  .search input::placeholder { color: #ccc; opacity: 1; }
  .filters .favorite { padding: 0 17px 2px 11px; }
  .favorite .icon { width: 20px; height: 20px; color: #000; }
  .fold { margin: 8px auto 0; line-height: 0; }
  .fold svg { width: 40px; height: 8px; }
  .fold path { fill: none; stroke: #bbb; stroke-width: 3; }
  .selected { display: flex; align-items: center; height: 49px; padding-left: 12px; background: #f1f1f1; border-bottom: 1px solid #dcdcdc; font-size: 10px; letter-spacing: 1px; color: #757575; }
  .selected > span { text-transform: uppercase; }
  .chip { display: flex; align-items: center; gap: 5px; height: 24px; margin-left: 7px; padding: 0 11px 0 8px; border-radius: 4px; background: #dedede; color: #444; font-weight: 500; letter-spacing: 1px; }
  .chip .icon { width: 10px; height: 10px; color: #777; }
  .chip .line { stroke-width: 3; }
  .clear { margin-left: 10px; font-size: 12px; font-weight: 500; letter-spacing: 1px; text-transform: uppercase; color: #0597b3; }

  .map { position: relative; height: 369px; overflow: hidden; }
  .tiles { display: block; width: 100%; height: 100%; }
  .tiles path { vector-effect: non-scaling-stroke; fill-rule: nonzero; stroke-linejoin: round; }
  .water, .sea { fill: #aad3df; }
  .land { fill: #f2efe9; }
  .forest { fill: #cbe2bd; stroke: #b4d9b0; stroke-width: 1; }
  .meadow { fill: #dff2c6; }
  .wash { fill: #edf0cf; }
  .dunes { fill: #f7e8c4; }
  .scrub { fill: #d2d6b0; }
  .military { fill: #f4dfda; stroke: #efc4bf; stroke-width: 1; }
  .hatched { fill: url(#hatch); }
  .hatch { stroke: #e8c2be; stroke-width: 1; opacity: .4; }
  .gray-area { fill: #cfcfcf; }
  .lake { fill: #99cbe0; }
  .tree { fill: #4da34d; }
  .limit, .baseline, .reserve, .ferry, .road, .minor, .rail, .motorway, .highway, .park-line { fill: none; }
  .limit { stroke: #9891b3; stroke-width: 3; }
  .baseline { stroke: #938eb0; stroke-width: 1.4; }
  .reserve { stroke: #8cc5b3; stroke-width: 1.4; }
  .ferry { stroke: #7d9bea; stroke-width: 1; stroke-dasharray: 5 4; }
  .road { stroke: #fbc282; stroke-width: 1.7; }
  .minor { stroke: #b6b4b4; stroke-width: 1; }
  .rail { stroke: #85807b; stroke-width: 1.4; }
  .motorway { stroke: #e2708a; stroke-width: 2.2; }
  .salmon { stroke: #fab29c; stroke-width: 2.2; }
  .park-line { stroke: #b9d8b5; stroke-width: 1.3; }
  .strong { stroke: #87bf86; stroke-width: 1.4; }
  .labels text, .vehicle { font-family: "Liberation Sans", Arial, sans-serif; text-anchor: middle; paint-order: stroke; stroke-linejoin: round; }
  .labels text { stroke: rgba(255, 255, 255, .8); stroke-width: 2px; }
  .labels .town { fill: #333; }
  .labels .park { fill: #2f9643; }
  .labels .range { fill: #a83b4b; }
  .labels .dune { fill: #bd9a4c; }
  .labels .bay { fill: #6a92cd; stroke: rgba(255, 255, 255, .4); }
  .vehicle { font-size: 15px; font-style: italic; font-weight: 700; fill: #fff; stroke: #333; stroke-width: 4px; }
  .marker { fill: #fff; stroke: #a39c8c; stroke-width: 2; }
  .arrow { fill: #8f8676; }
  .toolbar { position: absolute; top: 12px; right: 17px; display: flex; gap: 2px; box-shadow: 0 2px 8px rgba(0, 0, 0, .25); }
  .toolbar button { display: grid; place-items: center; width: 40px; height: 40px; background: #fff; color: #0bacca; }
  .toolbar .line { stroke-width: 1.4; }
  .scale { position: absolute; right: 18px; bottom: 13px; width: 82px; height: 22px; padding: 0 7px; border: 2px solid #2292b0; border-top: 0; background: rgba(255, 255, 255, .35); color: #2292b0; font: 700 12px/20px Roboto, sans-serif; }

  .panel { display: flex; flex-direction: column; flex: 1; padding: 0 22px; position: relative; background: #fff; box-shadow: 0 0 10px rgba(0, 0, 0, .15); }
  .credits { display: flex; justify-content: flex-end; gap: 9px; height: 16px; margin: 0 -16px 0 0; font-size: 10px; line-height: 16px; color: #8a8a8a; }
  .credits a { color: #555; }
  .handle { width: 40px; height: 5px; margin: 2px auto 0; border-radius: 3px; background: #bbb; }
  .summary { display: flex; align-items: center; justify-content: space-between; height: 34px; margin-bottom: 7px; padding: 0 13px 0 16px; }
  .summary span { font-size: 10px; font-weight: 500; letter-spacing: 1px; text-transform: uppercase; color: #858585; }
  .actions { display: flex; gap: 24px; color: #757575; }
  .actions .line { stroke-width: 1.4; }
  .actions .icon { width: 24px; height: 22px; }
  .actions button { position: relative; }
  .unsaved::after { content: ""; position: absolute; right: 0; top: 0; width: 4px; height: 4px; border-radius: 2px; background: #e2231a; }

  table { width: 100%; table-layout: fixed; border-collapse: separate; border-spacing: 0; }
  .wide { width: 208px; }
  .end { width: 8px; }
  thead th, thead td { height: 54px; padding: 4px 0 0; border-top: 1px solid #dcdcdc; border-bottom: 1px solid #777; text-align: left; }
  th div { display: flex; align-items: center; height: 20px; padding: 0 8px 0 10px; border-right: 2px solid #dfe1ec; font-size: 12px; font-weight: 700; letter-spacing: 1px; text-transform: uppercase; color: #333; white-space: nowrap; }
  .sortable div { padding-left: 17px; gap: 7px; }
  th .icon { width: 14px; height: 14px; }
  th .line { stroke-width: 2; }
  th button { margin-left: auto; }
  tbody td { height: 42px; padding: 0 0 1px 17px; border-bottom: 1px solid #dfe1ec; white-space: nowrap; overflow: hidden; }
  tbody tr:last-child td { border-bottom: 0; }
  tbody a { display: inline-block; line-height: 16px; border-bottom: 1px solid #222; font-weight: 700; letter-spacing: 1px; text-transform: uppercase; color: #333; }
  .mask { display: inline-block; height: 13px; margin: 0 1px; vertical-align: -2px; background: linear-gradient(90deg, #dedede, #e8e8e8 60%, #dcdcdc); }
  .type .icon { display: inline-block; width: 13px; height: 13px; margin: 0 7px 0 2px; vertical-align: -2px; color: #757575; }
  .type, .driver { color: #56544a; }
  tbody .driver { padding-left: 18px; }
  footer { display: flex; align-items: center; justify-content: flex-end; height: 64px; margin-top: auto; padding: 0 43px 8px 0; border-top: 1px solid #777; color: #333; }
  .per-page { display: flex; align-items: center; gap: 7px; margin-right: 26px; }
  select { appearance: none; border: 0; padding: 0; background: none; font: inherit; color: inherit; }
  footer input { width: 42px; height: 20px; padding: 0; margin-right: 4px; border: 1px solid #aaa; text-align: center; font: inherit; color: inherit; }
  footer button { margin-left: 22px; color: #b5b5b5; }
  footer button + button { margin-left: 16px; }
  footer .icon { width: 14px; height: 14px; }
  footer .line { stroke-width: 3; }
</style>
